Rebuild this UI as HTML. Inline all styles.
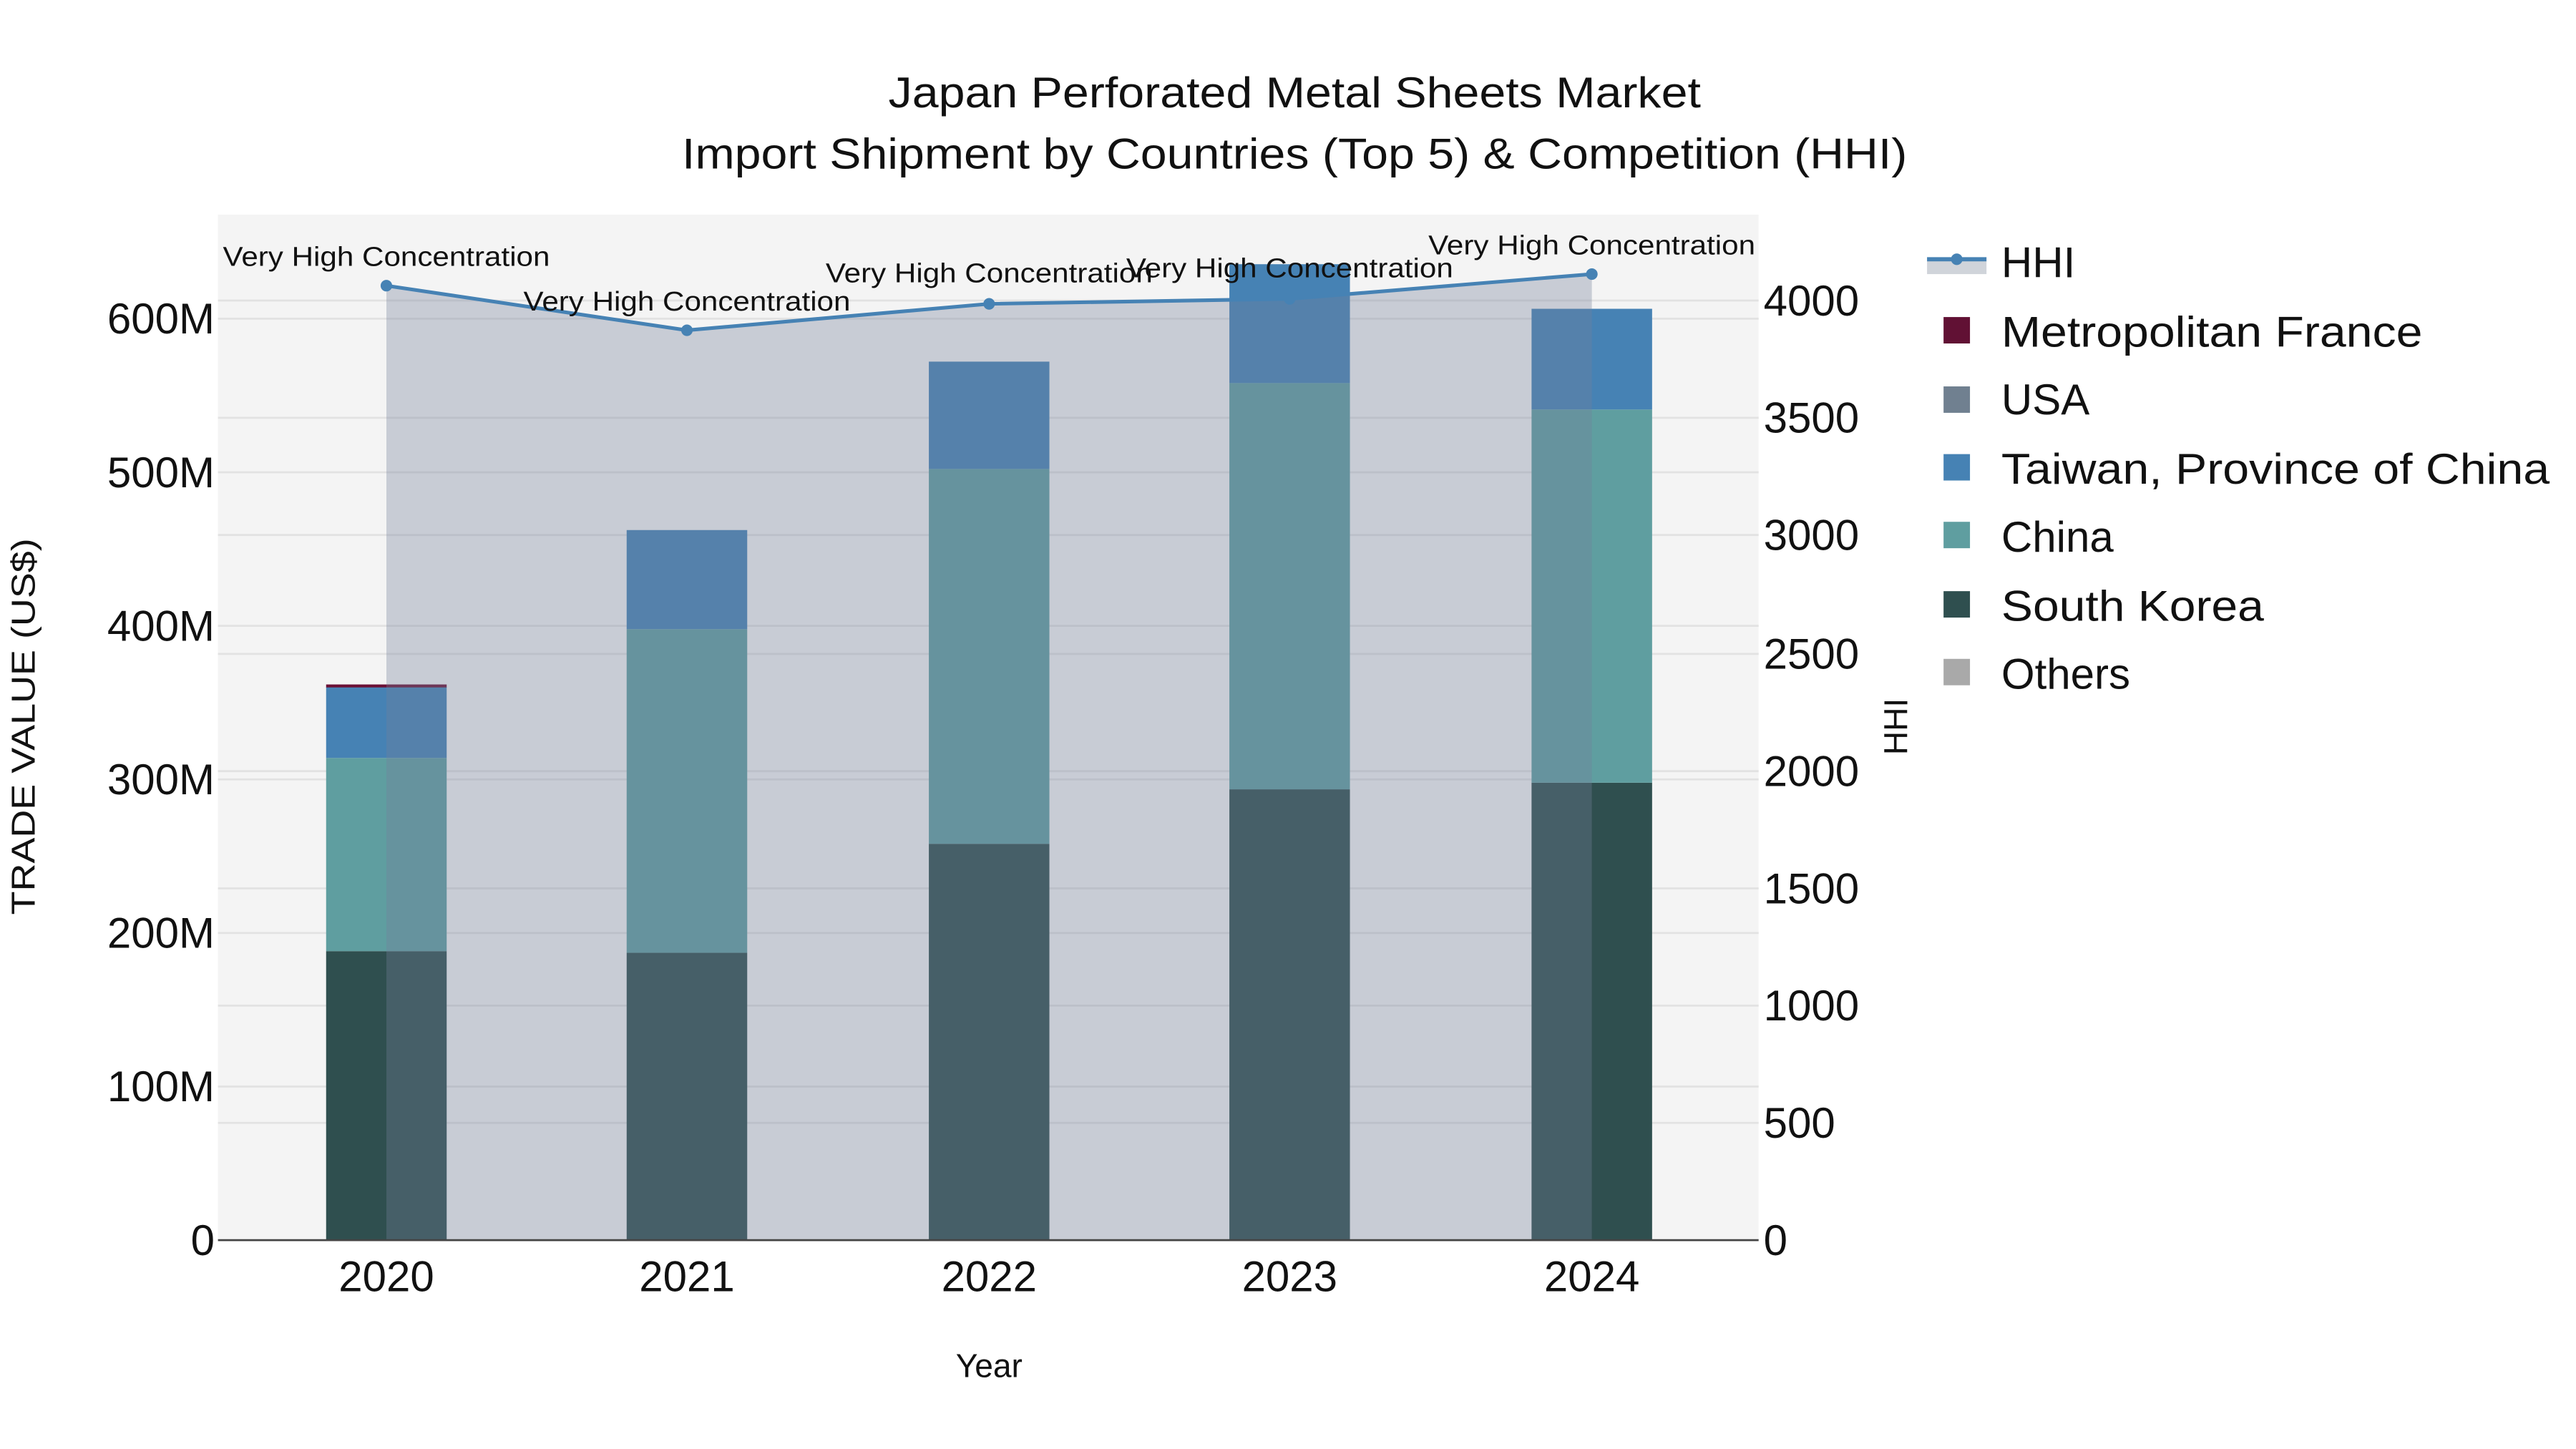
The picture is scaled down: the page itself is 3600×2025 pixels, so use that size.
<!DOCTYPE html>
<html><head><meta charset="utf-8"><style>
html,body{margin:0;padding:0;background:#fff;}
svg{display:block;}
text{font-family:"Liberation Sans",sans-serif;fill:#111;}
</style></head><body>
<svg width="3600" height="2025" viewBox="0 0 1560 877.5" preserveAspectRatio="none" xmlns="http://www.w3.org/2000/svg">
<rect x="0" y="0" width="1560" height="877.5" fill="#fff"/>
<text x="784" y="65" font-size="26" text-anchor="middle" textLength="492" lengthAdjust="spacingAndGlyphs">Japan Perforated Metal Sheets Market</text>
<text x="784" y="102" font-size="26" text-anchor="middle" textLength="742" lengthAdjust="spacingAndGlyphs">Import Shipment by Countries (Top 5) &amp; Competition (HHI)</text>
<rect x="132" y="130" width="933" height="621" fill="#f4f4f4"/>
<g stroke="#e2e2e2" stroke-width="1.2">
<line x1="132" x2="1065" y1="658" y2="658"/><line x1="132" x2="1065" y1="565" y2="565"/><line x1="132" x2="1065" y1="472" y2="472"/><line x1="132" x2="1065" y1="379" y2="379"/><line x1="132" x2="1065" y1="286" y2="286"/><line x1="132" x2="1065" y1="193" y2="193"/>
<line x1="132" x2="1065" y1="680" y2="680"/><line x1="132" x2="1065" y1="609" y2="609"/><line x1="132" x2="1065" y1="538" y2="538"/><line x1="132" x2="1065" y1="467" y2="467"/><line x1="132" x2="1065" y1="396" y2="396"/><line x1="132" x2="1065" y1="324" y2="324"/><line x1="132" x2="1065" y1="253" y2="253"/><line x1="132" x2="1065" y1="182" y2="182"/>
</g>
<g>
<rect x="197.5" y="576" width="73" height="175" fill="#2f4f4f"/><rect x="197.5" y="459" width="73" height="117" fill="#5f9ea0"/><rect x="197.5" y="416" width="73" height="43" fill="#4682b4"/><rect x="197.5" y="414.5" width="73" height="1.8" fill="#6b1035"/>
<rect x="379.5" y="577" width="73" height="174" fill="#2f4f4f"/><rect x="379.5" y="381" width="73" height="196" fill="#5f9ea0"/><rect x="379.5" y="321" width="73" height="60" fill="#4682b4"/>
<rect x="562.5" y="511" width="73" height="240" fill="#2f4f4f"/><rect x="562.5" y="284" width="73" height="227" fill="#5f9ea0"/><rect x="562.5" y="219" width="73" height="65" fill="#4682b4"/>
<rect x="744.5" y="478" width="73" height="273" fill="#2f4f4f"/><rect x="744.5" y="232" width="73" height="246" fill="#5f9ea0"/><rect x="744.5" y="160" width="73" height="72" fill="#4682b4"/>
<rect x="927.5" y="474" width="73" height="277" fill="#2f4f4f"/><rect x="927.5" y="248" width="73" height="226" fill="#5f9ea0"/><rect x="927.5" y="187" width="73" height="61" fill="#4682b4"/>
</g>
<polygon points="234,173 416,200 599,184 781,181 964,166 964,751 234,751" fill="rgba(117,128,154,0.345)"/>
<polyline points="234,173 416,200 599,184 781,181 964,166" fill="none" stroke="#4682b4" stroke-width="2.2"/>
<g fill="#4682b4"><circle cx="234" cy="173" r="3.5"/><circle cx="416" cy="200" r="3.5"/><circle cx="599" cy="184" r="3.5"/><circle cx="781" cy="181" r="3.5"/><circle cx="964" cy="166" r="3.5"/></g>
<g font-size="16.5" text-anchor="middle">
<text x="234" y="161" textLength="198" lengthAdjust="spacingAndGlyphs">Very High Concentration</text>
<text x="416" y="188" textLength="198" lengthAdjust="spacingAndGlyphs">Very High Concentration</text>
<text x="599" y="171" textLength="198" lengthAdjust="spacingAndGlyphs">Very High Concentration</text>
<text x="781" y="168" textLength="198" lengthAdjust="spacingAndGlyphs">Very High Concentration</text>
<text x="964" y="154" textLength="198" lengthAdjust="spacingAndGlyphs">Very High Concentration</text>
</g>
<line x1="132" x2="1065" y1="751" y2="751" stroke="#444" stroke-width="1.2"/>
<g font-size="26" text-anchor="end">
<text x="130" y="760">0</text><text x="130" y="667">100M</text><text x="130" y="574">200M</text><text x="130" y="481">300M</text><text x="130" y="388">400M</text><text x="130" y="295">500M</text><text x="130" y="202">600M</text>
</g>
<g font-size="26" text-anchor="start">
<text x="1068" y="760">0</text><text x="1068" y="689">500</text><text x="1068" y="618">1000</text><text x="1068" y="547">1500</text><text x="1068" y="476">2000</text><text x="1068" y="405">2500</text><text x="1068" y="333">3000</text><text x="1068" y="262">3500</text><text x="1068" y="191">4000</text>
</g>
<g font-size="26" text-anchor="middle">
<text x="234" y="782">2020</text><text x="416" y="782">2021</text><text x="599" y="782">2022</text><text x="781" y="782">2023</text><text x="964" y="782">2024</text>
</g>
<text x="599" y="834" font-size="20" text-anchor="middle">Year</text>
<text transform="translate(21,440) rotate(-90)" font-size="20" text-anchor="middle" textLength="228" lengthAdjust="spacingAndGlyphs">TRADE VALUE (US$)</text>
<text transform="translate(1155,440) rotate(-90)" font-size="20" text-anchor="middle">HHI</text>
<rect x="1167" y="158" width="36" height="8" fill="#d0d4da"/>
<line x1="1167" x2="1203" y1="157" y2="157" stroke="#4682b4" stroke-width="2.5"/>
<circle cx="1185" cy="157" r="3.5" fill="#4682b4"/>
<g font-size="26">
<text x="1212" y="168">HHI</text>
<text x="1212" y="210" textLength="255" lengthAdjust="spacingAndGlyphs">Metropolitan France</text>
<text x="1212" y="251">USA</text>
<text x="1212" y="293" textLength="332" lengthAdjust="spacingAndGlyphs">Taiwan, Province of China</text>
<text x="1212" y="334">China</text>
<text x="1212" y="376" textLength="159" lengthAdjust="spacingAndGlyphs">South Korea</text>
<text x="1212" y="417">Others</text>
</g>
<rect x="1177" y="192" width="16" height="16" fill="#611134"/>
<rect x="1177" y="234" width="16" height="16" fill="#708090"/>
<rect x="1177" y="275" width="16" height="16" fill="#4682b4"/>
<rect x="1177" y="316" width="16" height="16" fill="#5f9ea0"/>
<rect x="1177" y="358" width="16" height="16" fill="#2f4f4f"/>
<rect x="1177" y="399" width="16" height="16" fill="#a9a9a9"/>
</svg>
</body></html>
